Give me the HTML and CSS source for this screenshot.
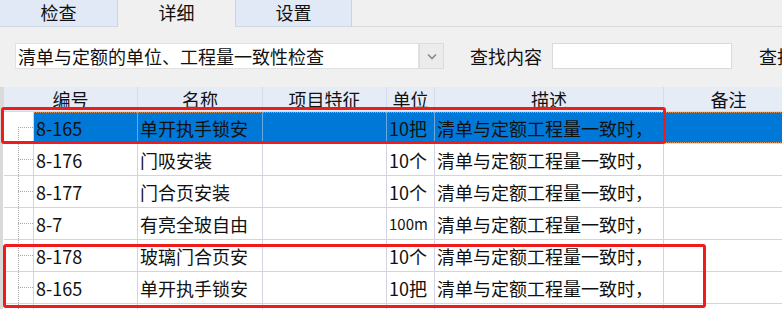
FILE: index.html
```html
<!DOCTYPE html>
<html lang="zh">
<head>
<meta charset="utf-8">
<link rel="stylesheet" href="styles.css">
</head>
<body>
<div class="stage">
  <div class="tabs">
    <div class="tab">检查</div>
    <div class="tab active">详细</div>
    <div class="tab">设置</div>
    <div class="tab-rest"></div>
  </div>
  <div class="toolbar">
    <div class="combo">
      <div class="combo-field">清单与定额的单位、工程量一致性检查</div>
      <div class="combo-btn">
        <svg width="10" height="7" viewBox="0 0 10 7"><path d="M1 1.5 L5 5.5 L9 1.5" fill="none" stroke="#8a8a8a" stroke-width="1.6"/></svg>
      </div>
    </div>
    <span class="label">查找内容</span>
    <div class="search"></div>
    <span class="label next">查找</span>
  </div>
  <div class="grid">
    <table>
      <colgroup>
        <col class="w-tree"><col class="w-code"><col class="w-name"><col class="w-feat"><col class="w-unit"><col class="w-desc"><col class="w-note">
      </colgroup>
      <thead>
        <tr><th colspan="2">编号</th><th>名称</th><th>项目特征</th><th>单位</th><th>描述</th><th>备注</th></tr>
      </thead>
      <tbody>
        <tr class="sel"><td class="tree first"></td><td>8-165</td><td>单开执手锁安</td><td></td><td>10把</td><td>清单与定额工程量一致时，</td><td></td></tr>
        <tr><td class="tree"></td><td>8-176</td><td>门吸安装</td><td></td><td>10个</td><td>清单与定额工程量一致时，</td><td></td></tr>
        <tr><td class="tree"></td><td>8-177</td><td>门合页安装</td><td></td><td>10个</td><td>清单与定额工程量一致时，</td><td></td></tr>
        <tr><td class="tree"></td><td>8-7</td><td>有亮全玻自由</td><td></td><td class="small">100m</td><td>清单与定额工程量一致时，</td><td></td></tr>
        <tr><td class="tree"></td><td>8-178</td><td>玻璃门合页安</td><td></td><td>10个</td><td>清单与定额工程量一致时，</td><td></td></tr>
        <tr><td class="tree"></td><td>8-165</td><td>单开执手锁安</td><td></td><td>10把</td><td>清单与定额工程量一致时，</td><td></td></tr>
        <tr><td class="tree"></td><td>8-166</td><td>单开执手锁安</td><td></td><td>10把</td><td>清单与定额工程量一致时，</td><td></td></tr>
      </tbody>
    </table>
  </div>
  <div class="mark mark-1"></div>
  <div class="mark mark-2"></div>
</div>
</body>
</html>
```

FILE: styles.css
```css
html, body {
  margin: 0;
  padding: 0;
  width: 782px;
  height: 309px;
  overflow: hidden;
  background: #f0f0f0;
  font-family: "Noto Sans CJK SC", "Noto Sans", sans-serif;
  color: #111;
}

.stage {
  position: relative;
  width: 782px;
  height: 309px;
  overflow: hidden;
}

/* Tabs */
.tabs {
  display: flex;
  height: 27px;
}
.tab {
  box-sizing: border-box;
  flex-shrink: 0;
  width: 118px;
  height: 27px;
  line-height: 25px;
  text-align: center;
  font-size: 18px;
  background: #e0e9f5;
  border-right: 1px solid #c9d5e4;
  border-bottom: 1px solid #cfd9e6;
}
.tab:nth-child(3) { width: 116px; }
.tab.active {
  background: #f0f0f0;
  border-bottom: none;
}
.tab-rest {
  flex: 1;
  border-bottom: 1px solid #d9d9d9;
  box-sizing: border-box;
}

/* Toolbar */
.toolbar {
  display: flex;
  align-items: center;
  height: 26px;
  padding: 16px 0 18px 15px;
  white-space: nowrap;
}
.toolbar > * { flex-shrink: 0; }
.combo {
  display: flex;
  width: 429px;
  height: 26px;
}
.combo-field {
  box-sizing: border-box;
  width: 404px;
  height: 26px;
  background: #fff;
  border: 1px solid #e1e1e1;
  font-size: 18px;
  line-height: 24px;
  padding-left: 2px;
  overflow: hidden;
}
.combo-btn {
  box-sizing: border-box;
  width: 25px;
  height: 26px;
  background: #ececec;
  border: 1px solid #dcdcdc;
  display: flex;
  align-items: center;
  justify-content: center;
}
.label {
  font-size: 18px;
  margin-left: 26px;
  line-height: 26px;
}
.search {
  box-sizing: border-box;
  width: 180px;
  height: 26px;
  margin-left: 10px;
  background: #fff;
  border: 1px solid #dadada;
}
.label.next { margin-left: 27px; }

/* Grid */
.grid {
  border-left: 3px solid #dadada;
  background: #fff;
  height: 222px;
  overflow: hidden;
}
table {
  border-collapse: collapse;
  table-layout: fixed;
  width: 790px;
}
.w-tree { width: 30px; }
.w-code { width: 104px; }
.w-name { width: 125px; }
.w-feat { width: 124px; }
.w-unit { width: 48px; }
.w-desc { width: 229px; }
.w-note { width: 130px; }

th {
  height: 24px;
  padding: 0;
  background: #e6ecf6;
  border: 1px solid #d4dbea;
  border-top: none;
  font-weight: normal;
  font-size: 18px;
  line-height: 22px;
  text-align: center;
  overflow: hidden;
  white-space: nowrap;
}
td {
  height: 31px;
  padding: 0 0 0 2px;
  border: 1px solid #d3d3e3;
  font-size: 18px;
  line-height: 24px;
  white-space: nowrap;
  overflow: hidden;
}
td.small { font-size: 15px; }

td.tree {
  border-left: none;
  background-color: #fff;
  background-image:
    repeating-linear-gradient(to bottom, #a8a8a8 0 1px, transparent 1px 2px),
    repeating-linear-gradient(to right, #a8a8a8 0 1px, transparent 1px 2px);
  background-size: 1px 100%, 16px 1px;
  background-position: 14px 0, 14px 15px;
  background-repeat: no-repeat;
}
td.tree.first {
  background-size: 1px 17px, 16px 1px;
  background-position: 14px 15px, 14px 15px;
}

tr.sel td:not(.tree) {
  background-color: #0078d7;
  border-left-color: #6aa8e0;
  border-right-color: #6aa8e0;
  background-image:
    repeating-linear-gradient(to right, #d4935a 0 1px, transparent 1px 2px),
    repeating-linear-gradient(to right, #d4935a 0 1px, transparent 1px 2px);
  background-size: 100% 1px, 100% 1px;
  background-position: 0 0, 0 100%;
  background-repeat: no-repeat;
}

/* Red annotation boxes drawn over the grid */
.mark {
  position: absolute;
  box-sizing: border-box;
  border: 3px solid #f01c1c;
  border-radius: 3px;
}
.mark-1 {
  left: 1px;
  top: 107px;
  width: 665px;
  height: 37px;
}
.mark-2 {
  left: 3px;
  top: 244px;
  width: 703px;
  height: 64px;
}
```
